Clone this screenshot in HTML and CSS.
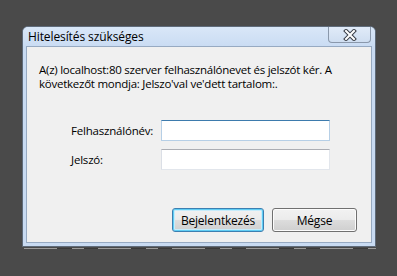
FILE: index.html
```html
<!DOCTYPE html>
<html lang="hu">
<head>
<meta charset="utf-8">
<title>Hitelesítés szükséges</title>
<link rel="stylesheet" href="styles.css">
</head>
<body>
<div class="dialog">
  <div class="titlebar">
    <span class="title">Hitelesítés szükséges</span>
    <div class="close">
      <svg width="14" height="12" viewBox="0 0 14 12">
        <path d="M3 2 L11 10 M11 2 L3 10" stroke="#3a3f48" stroke-width="4" stroke-linecap="square" fill="none"/>
        <path d="M3 2 L11 10 M11 2 L3 10" stroke="#ffffff" stroke-width="2" stroke-linecap="square" fill="none"/>
      </svg>
    </div>
  </div>
  <div class="client">
    <p class="message">A(z) localhost:80 szerver felhasználónevet és jelszót kér. A következőt mondja: Jelszo'val ve'dett tartalom:.</p>
    <div class="form">
      <div class="row">
        <label class="label">Felhasználónév:</label>
        <div class="input focused"></div>
      </div>
      <div class="row">
        <label class="label">Jelszó:</label>
        <div class="input"></div>
      </div>
    </div>
    <div class="buttons">
      <div class="btn default">Bejelentkezés</div>
      <div class="btn cancel">Mégse</div>
    </div>
  </div>
</div>
<div class="shadowline"></div>
</body>
</html>
```
FILE: styles.css
```css
html, body {
  margin: 0;
  padding: 0;
  background: #4a4a4a;
  width: 397px;
  height: 276px;
  overflow: hidden;
  font-family: "Open Sans", "Noto Sans", sans-serif;
  font-size: 12px;
  color: #000;
}
.dialog {
  margin: 26px 0 0 22px;
  width: 354px;
  height: 221px;
  box-sizing: border-box;
  border: 1px solid #5f6b7a;
  border-radius: 6px 6px 0 0;
  background: #c9dbf2;
  padding: 0 3px 3px 3px;
  display: flex;
  flex-direction: column;
}
.titlebar {
  height: 19px;
  display: flex;
  align-items: flex-start;
  justify-content: space-between;
  background: linear-gradient(#d9e7f8, #cadcf3);
  margin: 0 -3px;
  padding: 0 3px;
  border-radius: 5px 5px 0 0;
}
.title {
  margin: 2px 0 0 2px;
  font-size: 12px;
  line-height: 16px;
  letter-spacing: -0.1px;
  color: #000;
}
.close {
  width: 41px;
  height: 15px;
  margin-right: 1px;
  border: 1px solid #8a98ab;
  border-top: none;
  border-radius: 0 0 4px 4px;
  background: linear-gradient(#e1ebf8, #cfdef1);
  display: flex;
  align-items: center;
  justify-content: center;
}
.close svg { display: block; }
.client {
  flex: 1;
  border: 1px solid #97aac2;
  background: #f0f0f0;
  display: flex;
  flex-direction: column;
}
.message {
  margin: 16px 12px 0 12px;
  line-height: 14px;
  font-size: 11.5px;
  letter-spacing: -0.25px;
}
.form {
  margin: 29px 0 0 44px;
  display: flex;
  flex-direction: column;
  gap: 8px;
}
.row {
  display: flex;
  align-items: center;
}
.label {
  width: 90px;
  font-size: 11.5px;
  letter-spacing: -0.2px;
}
.input {
  width: 169px;
  height: 21px;
  box-sizing: border-box;
  background: #fff;
  border: 1px solid #e2e6ec;
  border-top-color: #abadb3;
  border-left-color: #dbdfe6;
}
.input.focused {
  border-color: #b6cfe6;
  border-top-color: #3d7bad;
}
.buttons {
  margin: 38px 14px 0 0;
  display: flex;
  justify-content: flex-end;
  gap: 8px;
}
.btn {
  height: 24px;
  box-sizing: border-box;
  border: 1px solid #707070;
  border-radius: 3px;
  background: linear-gradient(#f2f2f2 0%, #ebebeb 50%, #dddddd 50%, #cfcfcf 100%);
  box-shadow: inset 0 0 0 1px #fcfcfc;
  display: flex;
  align-items: center;
  justify-content: center;
  font-size: 12px;
  letter-spacing: -0.2px;
}
.btn.default {
  width: 92px;
  border-color: #3c7fb1;
  box-shadow: inset 0 0 0 1px #5fcdf4, inset 0 0 0 2px #c6ecfb;
}
.btn.cancel {
  width: 85px;
}
.shadowline {
  margin: 1px 0 0 24px;
  width: 352px;
  height: 1px;
  background: repeating-linear-gradient(90deg, #9a9a9a 0 33px, #3a3a3a 33px 48px, #9a9a9a 48px 60px, #3a3a3a 60px 74px);
}
```
